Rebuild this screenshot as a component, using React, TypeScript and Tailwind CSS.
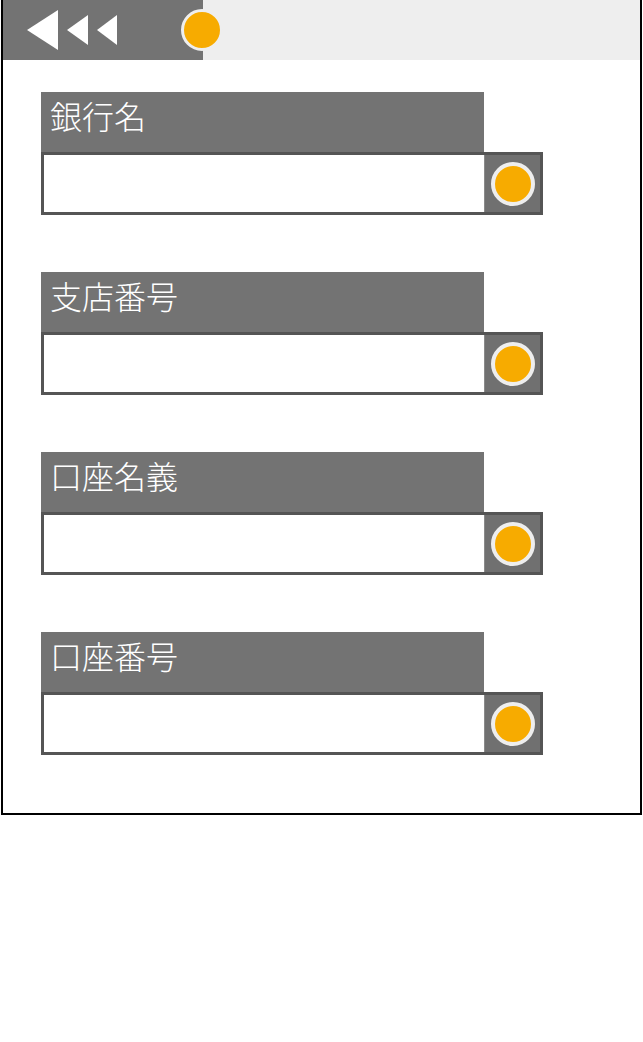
import React from "react";

const fields = ["銀行名", "支店番号", "口座名義", "口座番号"];

function Dot({ size = 44, ring = 4 }: { size?: number; ring?: number }) {
  return (
    <div
      className="rounded-full bg-[#f7ab00] border-[#eeeeee] box-border"
      style={{ width: size, height: size, borderWidth: ring }}
    />
  );
}

function Field({ label }: { label: string }) {
  return (
    <div className="flex flex-col">
      <div className="w-[443px] h-[60px] bg-[#737373] flex items-center pl-[9px] pb-[14px]">
        <span className="text-white text-[32px] leading-none font-light font-['Noto_Sans_CJK_JP',sans-serif]">
          {label}
        </span>
      </div>
      <div className="w-[502px] h-[63px] border-[3px] border-[#555555] flex bg-white">
        <div className="flex-1 bg-white" />
        <div className="w-[56px] h-full bg-[#707070] border-l border-[#8a8a8a] flex items-center justify-center">
          <Dot size={44} ring={4} />
        </div>
      </div>
    </div>
  );
}

export default function App() {
  return (
    <div className="w-[643px] h-[1042px] bg-white">
      <div className="relative ml-[1px] w-[641px] h-[815px] border-2 border-t-0 border-black box-border">
        <div className="flex h-[60px]">
          <div className="w-[200px] h-full bg-[#737373] flex items-center">
            <svg width="120" height="60" viewBox="0 0 120 60" className="ml-[-2px]">
              <polygon points="57,10 57,50 26,30" fill="#ffffff" />
              <polygon points="87,15 87,45 66,30" fill="#ffffff" />
              <polygon points="116,15 116,45 96,30" fill="#ffffff" />
            </svg>
          </div>
          <div className="flex-1 h-full bg-[#eeeeee]" />
        </div>
        <div className="absolute left-[178px] top-[9px]">
          <Dot size={42} ring={3} />
        </div>
        <div className="flex flex-col gap-[57px] pl-[38px] pt-[32px]">
          {fields.map((f) => (
            <Field key={f} label={f} />
          ))}
        </div>
      </div>
    </div>
  );
}
